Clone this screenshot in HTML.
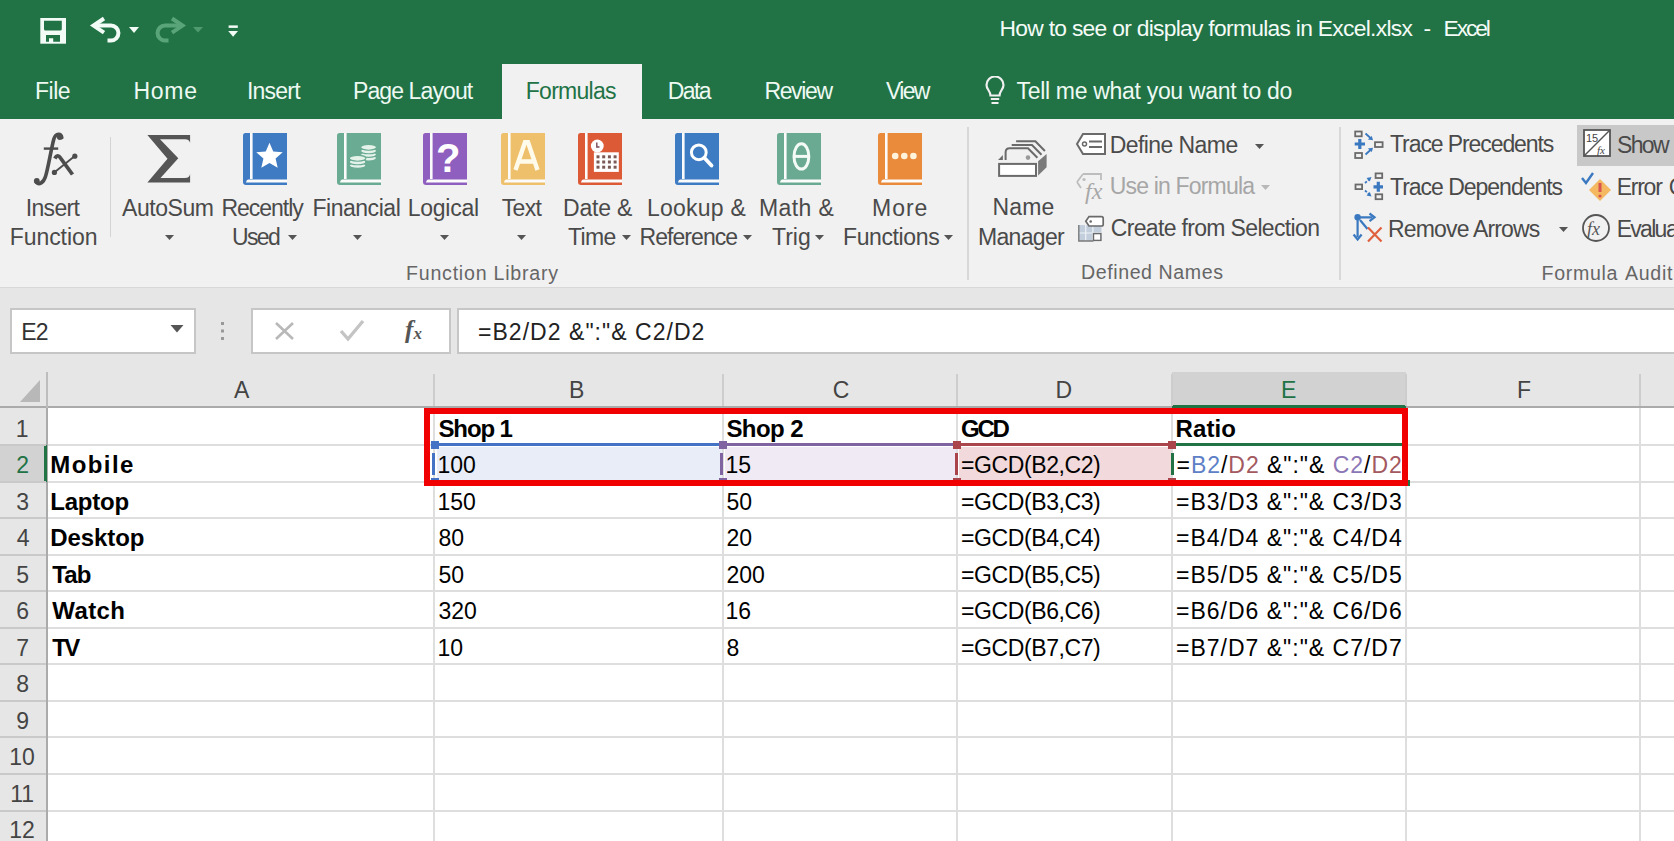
<!DOCTYPE html>
<html><head><meta charset="utf-8">
<style>
html,body{margin:0;padding:0;}
body{width:1674px;height:841px;overflow:hidden;position:relative;background:#fff;font-family:"Liberation Sans",sans-serif;}
.a{position:absolute;}
.t{position:absolute;white-space:nowrap;line-height:1;}
svg{display:block;}
</style></head>
<body>
<div class="a" style="left:0px;top:0px;width:1674px;height:119px;background:#217346"></div>
<div class="a" style="left:502px;top:64px;width:140px;height:55px;background:#f1f1f1"></div>
<svg class="a" style="left:40px;top:18px;" width="26" height="26" viewBox="0 0 26 26"><rect x="0.3" y="0" width="25.8" height="25.7" fill="#f2fbf5"/><path d="M4 2.7H21.8V11Q21.8 12.6 20.2 12.6H5.6Q4 12.6 4 11Z" fill="#217346"/><path d="M6 17H20V23.7H13.2V20.2H9V23.7H6Z" fill="#217346"/></svg>
<svg class="a" style="left:86px;top:12px;" width="40" height="36" viewBox="0 0 40 36"><path d="M18 6.5L7.5 13.6L18 20.7" fill="none" stroke="#f2fbf5" stroke-width="4"/><path d="M9 13.6H25A7.45 7.45 0 0 1 25 28.5H21.5" fill="none" stroke="#f2fbf5" stroke-width="4"/></svg>
<svg class="a" style="left:129px;top:27px;" width="10" height="6" viewBox="0 0 10 6"><path d="M0 0H10L5 6Z" fill="#f2fbf5"/></svg>
<svg class="a" style="left:150.4px;top:12px;" width="40" height="36" viewBox="0 0 40 36"><g transform="translate(40 0) scale(-1 1)"><path d="M18 6.5L7.5 13.6L18 20.7" fill="none" stroke="#5aa47a" stroke-width="4"/><path d="M9 13.6H25A7.45 7.45 0 0 1 25 28.5H21.5" fill="none" stroke="#5aa47a" stroke-width="4"/></g></svg>
<svg class="a" style="left:193.3px;top:27.2px;" width="10" height="5.5" viewBox="0 0 10 5.5"><path d="M0 0H10L5 5.5Z" fill="#4f9a6e"/></svg>
<svg class="a" style="left:228px;top:25px;" width="10" height="12" viewBox="0 0 10 12"><rect x="0.6" y="0.4" width="9.2" height="2.5" fill="#f2fbf5"/><path d="M0.2 6H10L5.1 11.8Z" fill="#f2fbf5"/></svg>
<svg class="a" style="left:984px;top:76px;" width="22" height="30" viewBox="0 0 22 30"><path d="M6.5 19.5C6.5 15 2.5 13.5 2.5 9A8.5 8.5 0 0 1 19.5 9C19.5 13.5 15.5 15 15.5 19.5Z" fill="none" stroke="#f0f0f0" stroke-width="2.2"/><path d="M6.8 23H15.2M7.5 27H14.5" stroke="#f0f0f0" stroke-width="2.2"/></svg>
<div class="a" style="left:0px;top:119px;width:1674px;height:168px;background:#f1f1f1"></div>
<div class="a" style="left:0px;top:287px;width:1674px;height:2px;background:#d8d8d8"></div>
<div class="a" style="left:110px;top:137px;width:1px;height:100px;background:#d4d4d4"></div>
<div class="a" style="left:967px;top:127px;width:2px;height:153px;background:#d8d8d8"></div>
<div class="a" style="left:1339px;top:127px;width:2px;height:153px;background:#d8d8d8"></div>
<div class="a" style="left:1577px;top:125px;width:97px;height:41px;background:#c8c8c8"></div>
<svg class="a" style="left:28px;top:128px;" width="60" height="62" viewBox="0 0 60 62"><path d="M33.8 9.5C33 5 28 5 26 10.5C23.5 19 20 41 17.5 48.5C15.5 55 11 57 8.5 54.5" fill="none" stroke="#4d4d4d" stroke-width="3.6" stroke-linecap="round"/><circle cx="31.8" cy="9" r="2.9" fill="#4d4d4d"/><circle cx="8.8" cy="53" r="2.9" fill="#4d4d4d"/><rect x="15.8" y="19.4" width="14.4" height="2.4" fill="#4d4d4d"/><path d="M26.8 30.5Q29.5 25.5 32.5 30L44.5 46.5" fill="none" stroke="#4d4d4d" stroke-width="3.8"/><path d="M46.5 28.3L26.5 44.3" stroke="#4d4d4d" stroke-width="1.9"/><circle cx="46.8" cy="28.2" r="2.6" fill="#4d4d4d"/><circle cx="26.4" cy="44.4" r="2.6" fill="#4d4d4d"/></svg>
<svg class="a" style="left:140px;top:128px;" width="60" height="62" viewBox="0 0 60 62"><path d="M7.4 7H50.1V15Q49.5 11.2 45 11.2H20L38.3 30.2L20.5 50.1H45Q49.5 50.1 50.1 45.7V54.5H7.4L27.5 30.8Z" fill="#555"/></svg>
<svg class="a" style="left:243px;top:133px;" width="44" height="52" viewBox="0 0 44 52"><path d="M0 2.5Q0 0 2.5 0H44V52H3Q0 52 0 49Z" fill="#3f7bc3"/><rect x="7" y="0" width="2.6" height="46" fill="#fbfbfb"/><path d="M5.5 46.5H44V49.5H3Q3.5 46.5 5.5 46.5Z" fill="#fbfbfb"/><path d="M26.50 9.70L30.26 18.42L39.72 19.30L32.59 25.58L34.67 34.85L26.50 30.00L18.33 34.85L20.41 25.58L13.28 19.30L22.74 18.42Z" fill="#fff"/></svg>
<svg class="a" style="left:336.5px;top:133px;" width="44" height="52" viewBox="0 0 44 52"><path d="M0 2.5Q0 0 2.5 0H44V52H3Q0 52 0 49Z" fill="#6aab93"/><rect x="7" y="0" width="2.6" height="46" fill="#fbfbfb"/><path d="M5.5 46.5H44V49.5H3Q3.5 46.5 5.5 46.5Z" fill="#fbfbfb"/><ellipse cx="31.6" cy="25.1" rx="7.9" ry="2.9" fill="#e4f2ea" stroke="#6aab93" stroke-width="1.1"/><ellipse cx="31.6" cy="21.5" rx="7.9" ry="2.9" fill="#e4f2ea" stroke="#6aab93" stroke-width="1.1"/><ellipse cx="31.6" cy="17.9" rx="7.9" ry="2.9" fill="#e4f2ea" stroke="#6aab93" stroke-width="1.1"/><ellipse cx="31.6" cy="14.3" rx="7.9" ry="2.9" fill="#e4f2ea" stroke="#6aab93" stroke-width="1.1"/><ellipse cx="20.6" cy="32.5" rx="8.3" ry="2.9" fill="#e4f2ea" stroke="#6aab93" stroke-width="1.1"/><ellipse cx="20.6" cy="28.9" rx="8.3" ry="2.9" fill="#e4f2ea" stroke="#6aab93" stroke-width="1.1"/><ellipse cx="20.6" cy="25.3" rx="8.3" ry="2.9" fill="#e4f2ea" stroke="#6aab93" stroke-width="1.1"/></svg>
<svg class="a" style="left:422.5px;top:133px;" width="44" height="52" viewBox="0 0 44 52"><path d="M0 2.5Q0 0 2.5 0H44V52H3Q0 52 0 49Z" fill="#8f5fbf"/><rect x="7" y="0" width="2.6" height="46" fill="#fbfbfb"/><path d="M5.5 46.5H44V49.5H3Q3.5 46.5 5.5 46.5Z" fill="#fbfbfb"/><text x="25.3" y="39" text-anchor="middle" font-family="Liberation Sans" font-weight="bold" font-size="40" fill="#fff">?</text></svg>
<svg class="a" style="left:501px;top:133px;" width="44" height="52" viewBox="0 0 44 52"><path d="M0 2.5Q0 0 2.5 0H44V52H3Q0 52 0 49Z" fill="#efc06c"/><rect x="7" y="0" width="2.6" height="46" fill="#fbfbfb"/><path d="M5.5 46.5H44V49.5H3Q3.5 46.5 5.5 46.5Z" fill="#fbfbfb"/><path d="M14.5 37L24 9.3H27L36.5 37M18.7 28.5H32.3" fill="none" stroke="#fffbea" stroke-width="4.4"/></svg>
<svg class="a" style="left:577.5px;top:133px;" width="44" height="52" viewBox="0 0 44 52"><path d="M0 2.5Q0 0 2.5 0H44V52H3Q0 52 0 49Z" fill="#dd5a37"/><rect x="7" y="0" width="2.6" height="46" fill="#fbfbfb"/><path d="M5.5 46.5H44V49.5H3Q3.5 46.5 5.5 46.5Z" fill="#fbfbfb"/><circle cx="19.3" cy="13" r="6.4" fill="#fff"/><path d="M18.8 9.5V14H21.5" fill="none" stroke="#7a4a5a" stroke-width="1.4"/><rect x="15.9" y="19.3" width="24.9" height="19.6" fill="#fff"/><g fill="#7b5a55"><rect x="18.5" y="22.3" width="3" height="3"/><rect x="24.2" y="22.3" width="3" height="3"/><rect x="29.9" y="22.3" width="3" height="3"/><rect x="35.6" y="22.3" width="3" height="3"/><rect x="18.5" y="27.5" width="3" height="3"/><rect x="24.2" y="27.5" width="3" height="3"/><rect x="29.9" y="27.5" width="3" height="3"/><rect x="35.6" y="27.5" width="3" height="3"/><rect x="18.5" y="32.7" width="3" height="3"/><rect x="24.2" y="32.7" width="3" height="3"/><rect x="29.9" y="32.7" width="3" height="3"/><rect x="35.6" y="32.7" width="3" height="3"/></g></svg>
<svg class="a" style="left:674.5px;top:133px;" width="44" height="52" viewBox="0 0 44 52"><path d="M0 2.5Q0 0 2.5 0H44V52H3Q0 52 0 49Z" fill="#3d7bc2"/><rect x="7" y="0" width="2.6" height="46" fill="#fbfbfb"/><path d="M5.5 46.5H44V49.5H3Q3.5 46.5 5.5 46.5Z" fill="#fbfbfb"/><circle cx="23.8" cy="19.3" r="7.4" fill="none" stroke="#fff" stroke-width="3"/><path d="M29.3 24.8L36.5 32.5" stroke="#fff" stroke-width="3.8" stroke-linecap="round"/></svg>
<svg class="a" style="left:777px;top:133px;" width="44" height="52" viewBox="0 0 44 52"><path d="M0 2.5Q0 0 2.5 0H44V52H3Q0 52 0 49Z" fill="#6aaa93"/><rect x="7" y="0" width="2.6" height="46" fill="#fbfbfb"/><path d="M5.5 46.5H44V49.5H3Q3.5 46.5 5.5 46.5Z" fill="#fbfbfb"/><ellipse cx="24.4" cy="23.4" rx="7.4" ry="12.7" fill="none" stroke="#f4fbf6" stroke-width="3"/><path d="M17.5 23.4H31.3" stroke="#f4fbf6" stroke-width="3"/></svg>
<svg class="a" style="left:877.5px;top:133px;" width="44" height="52" viewBox="0 0 44 52"><path d="M0 2.5Q0 0 2.5 0H44V52H3Q0 52 0 49Z" fill="#ea8a3b"/><rect x="7" y="0" width="2.6" height="46" fill="#fbfbfb"/><path d="M5.5 46.5H44V49.5H3Q3.5 46.5 5.5 46.5Z" fill="#fbfbfb"/><circle cx="17.2" cy="23" r="3.3" fill="#fff3dc"/><circle cx="26.3" cy="23" r="3.3" fill="#fff3dc"/><circle cx="35.4" cy="23" r="3.3" fill="#fff3dc"/></svg>
<svg class="a" style="left:164.5px;top:234.5px;" width="9" height="5" viewBox="0 0 9 5"><path d="M0 0H9L4.5 5Z" fill="#555"/></svg>
<svg class="a" style="left:353px;top:234.5px;" width="9" height="5" viewBox="0 0 9 5"><path d="M0 0H9L4.5 5Z" fill="#555"/></svg>
<svg class="a" style="left:440px;top:234.5px;" width="9" height="5" viewBox="0 0 9 5"><path d="M0 0H9L4.5 5Z" fill="#555"/></svg>
<svg class="a" style="left:517px;top:234.5px;" width="9" height="5" viewBox="0 0 9 5"><path d="M0 0H9L4.5 5Z" fill="#555"/></svg>
<svg class="a" style="left:287.5px;top:235px;" width="9" height="5" viewBox="0 0 9 5"><path d="M0 0H9L4.5 5Z" fill="#555"/></svg>
<svg class="a" style="left:621.5px;top:235px;" width="9" height="5" viewBox="0 0 9 5"><path d="M0 0H9L4.5 5Z" fill="#555"/></svg>
<svg class="a" style="left:742.5px;top:235px;" width="9" height="5" viewBox="0 0 9 5"><path d="M0 0H9L4.5 5Z" fill="#555"/></svg>
<svg class="a" style="left:815px;top:235px;" width="9" height="5" viewBox="0 0 9 5"><path d="M0 0H9L4.5 5Z" fill="#555"/></svg>
<svg class="a" style="left:944px;top:235px;" width="9" height="5" viewBox="0 0 9 5"><path d="M0 0H9L4.5 5Z" fill="#555"/></svg>
<svg class="a" style="left:1255px;top:143.5px;" width="9" height="5" viewBox="0 0 9 5"><path d="M0 0H9L4.5 5Z" fill="#555"/></svg>
<svg class="a" style="left:1261px;top:185px;" width="9" height="5" viewBox="0 0 9 5"><path d="M0 0H9L4.5 5Z" fill="#b8b8b8"/></svg>
<svg class="a" style="left:1559px;top:227px;" width="9" height="5" viewBox="0 0 9 5"><path d="M0 0H9L4.5 5Z" fill="#555"/></svg>
<svg class="a" style="left:995px;top:138px;" width="56" height="44" viewBox="0 0 56 44"><g fill="none" stroke="#6a6a6a" stroke-width="2"><path d="M21.1 3.2H40.4L49.9 13"/><path d="M16.7 7H37L46.5 16.8"/><path d="M10.6 22V14.5Q10.6 10.3 14.7 10.3H33L42.4 19.8"/></g><path d="M3.1 22L7.9 17.1V22Z" fill="#6a6a6a"/><circle cx="33" cy="19.6" r="2.3" fill="#9a9a9a"/><rect x="4.1" y="25.9" width="36.9" height="12" fill="#fff" stroke="#6a6a6a" stroke-width="2"/><path d="M43.1 23.2L51.6 16.1V29.3L43.1 37.4Z" fill="#7a7a7a"/></svg>
<svg class="a" style="left:1075px;top:132px;" width="32" height="24" viewBox="0 0 32 24"><path d="M8 2H30V22H8L2 12Z" fill="#fff" stroke="#6a6a6a" stroke-width="2"/><circle cx="9.5" cy="12" r="2" fill="none" stroke="#6a6a6a" stroke-width="1.5"/><path d="M14 9.5H27M14 15H27" stroke="#6a6a6a" stroke-width="2"/></svg>
<svg class="a" style="left:1075px;top:172px;" width="32" height="32" viewBox="0 0 32 32"><path d="M8 2H26V8M2 10L8 2M2 10L6 16" fill="none" stroke="#bdbdbd" stroke-width="1.8"/><circle cx="9" cy="7.5" r="1.6" fill="#bdbdbd"/><text x="10" y="27" font-family="Liberation Serif" font-style="italic" font-size="24" fill="#a8a8a8">fx</text></svg>
<svg class="a" style="left:1076px;top:214px;" width="30" height="30" viewBox="0 0 30 30"><rect x="2.6" y="11.1" width="22.8" height="15.8" fill="#c3cedc"/><path d="M2.6 19H25.4M9.7 11.1V26.9M16.9 11.1V26.9" stroke="#eef2f6" stroke-width="1.2"/><rect x="17.5" y="19.6" width="7.4" height="6.8" fill="#fff" stroke="#6a6a6a" stroke-width="1.4"/><path d="M2.8 11V27H17.5" fill="none" stroke="#7a7a7a" stroke-width="1.4"/><path d="M13 2.6H25.5Q27.2 2.6 27.2 4.3V10.4Q27.2 12 25.5 12H13L9.8 7.3Z" fill="#fff" stroke="#6a6a6a" stroke-width="1.7"/><circle cx="14.7" cy="7.5" r="1.3" fill="#6a6a6a"/></svg>
<svg class="a" style="left:1352px;top:128px;" width="34" height="34" viewBox="0 0 34 34"><g fill="none" stroke="#6a6a6a" stroke-width="1.8"><rect x="3.2" y="3.5" width="6.5" height="4.8"/><rect x="3.2" y="25" width="6.8" height="5"/><rect x="23" y="14.2" width="7.6" height="4.8"/></g><path d="M2.7 16H13M7.8 11V21" stroke="#3a78c0" stroke-width="3.2"/><path d="M13.5 5.5L18.5 10M13.5 26.5L18.5 22" stroke="#3a78c0" stroke-width="1.8"/><path d="M21 12.3L15.8 11.6L19.8 8Z M21 19.7L15.8 20.4L19.8 24Z" fill="#3a78c0"/></svg>
<svg class="a" style="left:1352px;top:170px;" width="34" height="34" viewBox="0 0 34 34"><g fill="none" stroke="#6a6a6a" stroke-width="1.8"><rect x="3.5" y="14.5" width="6.6" height="4.6"/><rect x="23.6" y="3.4" width="6.6" height="4.6"/><rect x="23.6" y="24.3" width="6.6" height="4.9"/></g><path d="M21.5 16.8H31M26.3 11.8V21.8" stroke="#3a78c0" stroke-width="3.2"/><path d="M13 13L17.5 9M13 20.5L17.5 24.5" stroke="#3a78c0" stroke-width="1.8" stroke-dasharray="2.5 1.5"/><path d="M19.5 7L14.5 8L17.8 11.5Z M19.5 26.5L14.5 25.5L17.8 22Z" fill="#3a78c0"/></svg>
<svg class="a" style="left:1352px;top:212px;" width="34" height="34" viewBox="0 0 34 34"><circle cx="5.6" cy="5.3" r="3.2" fill="#3a78c0"/><path d="M5.6 5.3H20M5.6 5.3V25" stroke="#3a78c0" stroke-width="2.2"/><path d="M1.6 22.5L5.6 27.5L9.6 22.5M17.5 1.5L22.5 5.3L17.5 9.1" fill="none" stroke="#3a78c0" stroke-width="2.2"/><path d="M8 8L15.5 17" stroke="#3a78c0" stroke-width="2.2"/><path d="M16 15.5L29.5 29.5M29.5 15.5L16 29.5" stroke="#e0603e" stroke-width="2.2"/></svg>
<svg class="a" style="left:1582px;top:128px;" width="32" height="34" viewBox="0 0 32 34"><rect x="2" y="2" width="26" height="26" fill="#fff" stroke="#555" stroke-width="1.8"/><path d="M2 28L28 2" stroke="#555" stroke-width="1.5"/><text x="4" y="14" font-family="Liberation Sans" font-size="11" fill="#444">15</text><text x="15" y="26" font-family="Liberation Serif" font-style="italic" font-size="11" fill="#444">fx</text></svg>
<svg class="a" style="left:1581px;top:171px;" width="34" height="32" viewBox="0 0 34 32"><path d="M1 7L5 12L12 2" fill="none" stroke="#3a78c0" stroke-width="2.4"/><path d="M19 8L30 19L19 30L8 19Z" fill="#f4b860"/><path d="M19 12V21" stroke="#d9534f" stroke-width="3"/><circle cx="19" cy="25" r="1.6" fill="#d9534f"/></svg>
<svg class="a" style="left:1581px;top:212px;" width="32" height="32" viewBox="0 0 32 32"><circle cx="15" cy="16" r="13" fill="none" stroke="#555" stroke-width="1.8"/><text x="6" y="23" font-family="Liberation Serif" font-style="italic" font-size="18" fill="#555">fx</text></svg>
<div class="a" style="left:0px;top:288px;width:1674px;height:84px;background:#e6e6e6"></div>
<div class="a" style="left:10px;top:308px;width:186px;height:46px;background:#fff;border:2px solid #c6c6c6;box-sizing:border-box"></div>
<svg class="a" style="left:169.5px;top:325px;" width="14" height="8" viewBox="0 0 14 8"><path d="M0.5 0H13.5L7 7.5Z" fill="#555"/></svg>
<svg class="a" style="left:219px;top:321px;" width="8" height="20" viewBox="0 0 8 20"><rect x="2" y="1" width="3" height="3" fill="#999"/><rect x="2" y="8.5" width="3" height="3" fill="#999"/><rect x="2" y="16" width="3" height="3" fill="#999"/></svg>
<div class="a" style="left:251px;top:308px;width:200px;height:46px;background:#fff;border:2px solid #c6c6c6;box-sizing:border-box"></div>
<svg class="a" style="left:273px;top:320px;" width="24" height="22" viewBox="0 0 24 22"><path d="M3 3L20 19M20 3L3 19" stroke="#b8b8b8" stroke-width="2.6"/></svg>
<svg class="a" style="left:338px;top:317px;" width="28" height="26" viewBox="0 0 28 26"><path d="M3 14L10 22L25 4" fill="none" stroke="#c4c4c4" stroke-width="3.4"/></svg>
<svg class="a" style="left:400px;top:314px;" width="34" height="32" viewBox="0 0 34 32"><text x="5" y="24" font-family="Liberation Serif" font-style="italic" font-weight="bold" font-size="25" fill="#555">f</text><text x="13.5" y="24.5" font-family="Liberation Serif" font-style="italic" font-weight="bold" font-size="17" fill="#555">x</text></svg>
<div class="a" style="left:457px;top:308px;width:1230px;height:46px;background:#fff;border:2px solid #c6c6c6;box-sizing:border-box"></div>
<div class="a" style="left:0px;top:372px;width:1674px;height:36px;background:#e6e6e6"></div>
<div class="a" style="left:0px;top:406px;width:1674px;height:2px;background:#ababab"></div>
<div class="a" style="left:1172px;top:372px;width:234px;height:34px;background:#d2d2d2"></div>
<div class="a" style="left:1172px;top:405px;width:234px;height:3px;background:#217346"></div>
<div class="a" style="left:46px;top:372px;width:2px;height:36px;background:#bdbdbd"></div>
<svg class="a" style="left:18px;top:378px;" width="24" height="26" viewBox="0 0 24 26"><path d="M22 2V24H2Z" fill="#b8b8b8"/></svg>
<div class="a" style="left:433px;top:374px;width:2px;height:32px;background:#cdcdcd"></div>
<div class="a" style="left:722px;top:374px;width:2px;height:32px;background:#cdcdcd"></div>
<div class="a" style="left:956px;top:374px;width:2px;height:32px;background:#cdcdcd"></div>
<div class="a" style="left:1171px;top:374px;width:2px;height:32px;background:#cdcdcd"></div>
<div class="a" style="left:1405px;top:374px;width:2px;height:32px;background:#cdcdcd"></div>
<div class="a" style="left:1639px;top:374px;width:2px;height:32px;background:#cdcdcd"></div>
<div class="a" style="left:0px;top:408px;width:46px;height:433px;background:#e6e6e6"></div>
<div class="a" style="left:0px;top:446px;width:46px;height:36px;background:#d2d2d2"></div>
<div class="a" style="left:46px;top:408px;width:2px;height:433px;background:#ababab"></div>
<div class="a" style="left:43.5px;top:445px;width:3.5px;height:37px;background:#217346"></div>
<div class="a" style="left:0px;top:444px;width:46px;height:2px;background:#c9c9c9"></div>
<div class="a" style="left:48px;top:444px;width:1626px;height:2px;background:#dedede"></div>
<div class="a" style="left:0px;top:481px;width:46px;height:2px;background:#c9c9c9"></div>
<div class="a" style="left:48px;top:481px;width:1626px;height:2px;background:#dedede"></div>
<div class="a" style="left:0px;top:517px;width:46px;height:2px;background:#c9c9c9"></div>
<div class="a" style="left:48px;top:517px;width:1626px;height:2px;background:#dedede"></div>
<div class="a" style="left:0px;top:554px;width:46px;height:2px;background:#c9c9c9"></div>
<div class="a" style="left:48px;top:554px;width:1626px;height:2px;background:#dedede"></div>
<div class="a" style="left:0px;top:590px;width:46px;height:2px;background:#c9c9c9"></div>
<div class="a" style="left:48px;top:590px;width:1626px;height:2px;background:#dedede"></div>
<div class="a" style="left:0px;top:627px;width:46px;height:2px;background:#c9c9c9"></div>
<div class="a" style="left:48px;top:627px;width:1626px;height:2px;background:#dedede"></div>
<div class="a" style="left:0px;top:663px;width:46px;height:2px;background:#c9c9c9"></div>
<div class="a" style="left:48px;top:663px;width:1626px;height:2px;background:#dedede"></div>
<div class="a" style="left:0px;top:700px;width:46px;height:2px;background:#c9c9c9"></div>
<div class="a" style="left:48px;top:700px;width:1626px;height:2px;background:#dedede"></div>
<div class="a" style="left:0px;top:736px;width:46px;height:2px;background:#c9c9c9"></div>
<div class="a" style="left:48px;top:736px;width:1626px;height:2px;background:#dedede"></div>
<div class="a" style="left:0px;top:773px;width:46px;height:2px;background:#c9c9c9"></div>
<div class="a" style="left:48px;top:773px;width:1626px;height:2px;background:#dedede"></div>
<div class="a" style="left:0px;top:810px;width:46px;height:2px;background:#c9c9c9"></div>
<div class="a" style="left:48px;top:810px;width:1626px;height:2px;background:#dedede"></div>
<div class="a" style="left:0px;top:846px;width:46px;height:2px;background:#c9c9c9"></div>
<div class="a" style="left:48px;top:846px;width:1626px;height:2px;background:#dedede"></div>
<div class="a" style="left:433px;top:408px;width:2px;height:433px;background:#dedede"></div>
<div class="a" style="left:722px;top:408px;width:2px;height:433px;background:#dedede"></div>
<div class="a" style="left:956px;top:408px;width:2px;height:433px;background:#dedede"></div>
<div class="a" style="left:1171px;top:408px;width:2px;height:433px;background:#dedede"></div>
<div class="a" style="left:1405px;top:408px;width:2px;height:433px;background:#dedede"></div>
<div class="a" style="left:1639px;top:408px;width:2px;height:433px;background:#dedede"></div>
<div class="a" style="left:437px;top:447px;width:285px;height:34px;background:#e8edf7"></div>
<div class="a" style="left:725px;top:447px;width:231px;height:34px;background:#efeaf3"></div>
<div class="a" style="left:959px;top:447px;width:212px;height:34px;background:#f2d9db"></div>
<div class="a" style="left:438.5px;top:443px;width:280px;height:3px;background:#4472c4"></div>
<div class="a" style="left:430.5px;top:441px;width:8px;height:8px;background:#4472c4"></div>
<div class="a" style="left:432px;top:453px;width:3px;height:22px;background:#4472c4"></div>
<div class="a" style="left:430.5px;top:477.5px;width:8px;height:3px;background:#4472c4"></div>
<div class="a" style="left:726.5px;top:443px;width:226.5px;height:3px;background:#8064a2"></div>
<div class="a" style="left:718.5px;top:441px;width:8px;height:8px;background:#8064a2"></div>
<div class="a" style="left:720px;top:453px;width:3px;height:22px;background:#8064a2"></div>
<div class="a" style="left:718.5px;top:477.5px;width:8px;height:3px;background:#8064a2"></div>
<div class="a" style="left:961px;top:443px;width:207px;height:3px;background:#a9454b"></div>
<div class="a" style="left:953px;top:441px;width:8px;height:8px;background:#a9454b"></div>
<div class="a" style="left:954.5px;top:453px;width:3px;height:22px;background:#a9454b"></div>
<div class="a" style="left:953px;top:477.5px;width:8px;height:3px;background:#a9454b"></div>
<div class="a" style="left:1176px;top:443px;width:226px;height:3px;background:#217346"></div>
<div class="a" style="left:1168px;top:441px;width:8px;height:8px;background:#a9454b"></div>
<div class="a" style="left:1170.5px;top:453px;width:3px;height:22px;background:#217346"></div>
<div class="a" style="left:1168px;top:477.5px;width:8px;height:3px;background:#a9454b"></div>
<div class="a" style="left:1402px;top:480px;width:8px;height:6px;background:#217346"></div>
<div class="a" style="left:424px;top:408px;width:984px;height:78px;border:6px solid #f00000;box-sizing:border-box"></div>
<div class="t" style="left:999.50px;top:17.30px;font-size:22.8px;color:#f4fbf6;letter-spacing:-0.70px">How to see or display formulas in Excel.xlsx</div>
<div class="t" style="left:1423.40px;top:17.30px;font-size:22.8px;color:#f4fbf6">-</div>
<div class="t" style="left:1443.60px;top:17.30px;font-size:22.8px;color:#f4fbf6;letter-spacing:-2.15px">Excel</div>
<div class="t" style="left:35.00px;top:80.03px;font-size:23px;color:#eef9f2;letter-spacing:-0.47px">File</div>
<div class="t" style="left:133.50px;top:80.03px;font-size:23px;color:#eef9f2;letter-spacing:0.73px">Home</div>
<div class="t" style="left:247.00px;top:80.03px;font-size:23px;color:#eef9f2;letter-spacing:-0.80px">Insert</div>
<div class="t" style="left:353.00px;top:80.03px;font-size:23px;color:#eef9f2;letter-spacing:-0.90px">Page Layout</div>
<div class="t" style="left:525.80px;top:80.03px;font-size:23px;color:#217346;letter-spacing:-0.74px">Formulas</div>
<div class="t" style="left:667.70px;top:80.03px;font-size:23px;color:#eef9f2;letter-spacing:-1.57px">Data</div>
<div class="t" style="left:764.40px;top:80.03px;font-size:23px;color:#eef9f2;letter-spacing:-1.36px">Review</div>
<div class="t" style="left:886.00px;top:80.03px;font-size:23px;color:#eef9f2;letter-spacing:-1.67px">View</div>
<div class="t" style="left:1016.50px;top:80.03px;font-size:23px;color:#eef9f2;letter-spacing:-0.31px">Tell me what you want to do</div>
<div class="t" style="left:25.80px;top:196.53px;font-size:23px;color:#4a4a4a;letter-spacing:-0.70px">Insert</div>
<div class="t" style="left:9.70px;top:226.03px;font-size:23px;color:#4a4a4a;letter-spacing:-0.06px">Function</div>
<div class="t" style="left:122.00px;top:196.53px;font-size:23px;color:#4a4a4a;letter-spacing:-0.43px">AutoSum</div>
<div class="t" style="left:221.40px;top:196.53px;font-size:23px;color:#4a4a4a;letter-spacing:-1.01px">Recently</div>
<div class="t" style="left:232.00px;top:226.03px;font-size:23px;color:#4a4a4a;letter-spacing:-1.67px">Used</div>
<div class="t" style="left:312.40px;top:196.53px;font-size:23px;color:#4a4a4a;letter-spacing:-0.46px">Financial</div>
<div class="t" style="left:407.70px;top:196.53px;font-size:23px;color:#4a4a4a;letter-spacing:-0.23px">Logical</div>
<div class="t" style="left:501.70px;top:196.53px;font-size:23px;color:#4a4a4a;letter-spacing:-0.63px">Text</div>
<div class="t" style="left:563.00px;top:196.53px;font-size:23px;color:#4a4a4a;letter-spacing:-0.20px">Date &amp;</div>
<div class="t" style="left:568.00px;top:226.03px;font-size:23px;color:#4a4a4a;letter-spacing:-0.67px">Time</div>
<div class="t" style="left:647.00px;top:196.53px;font-size:23px;color:#4a4a4a;letter-spacing:0.23px">Lookup &amp;</div>
<div class="t" style="left:639.50px;top:226.03px;font-size:23px;color:#4a4a4a;letter-spacing:-0.94px">Reference</div>
<div class="t" style="left:759.00px;top:196.53px;font-size:23px;color:#4a4a4a;letter-spacing:0.40px">Math &amp;</div>
<div class="t" style="left:772.00px;top:226.03px;font-size:23px;color:#4a4a4a">Trig</div>
<div class="t" style="left:872.00px;top:196.53px;font-size:23px;color:#4a4a4a;letter-spacing:1.00px">More</div>
<div class="t" style="left:843.00px;top:226.03px;font-size:23px;color:#4a4a4a;letter-spacing:-0.38px">Functions</div>
<div class="t" style="left:992.60px;top:195.53px;font-size:23px;color:#4a4a4a;letter-spacing:0.13px">Name</div>
<div class="t" style="left:978.00px;top:225.53px;font-size:23px;color:#4a4a4a;letter-spacing:-0.67px">Manager</div>
<div class="t" style="left:1109.70px;top:134.23px;font-size:23px;color:#4a4a4a;letter-spacing:-0.57px">Define Name</div>
<div class="t" style="left:1109.70px;top:175.33px;font-size:23px;color:#a6a6a6;letter-spacing:-0.82px">Use in Formula</div>
<div class="t" style="left:1110.70px;top:217.13px;font-size:23px;color:#4a4a4a;letter-spacing:-0.66px">Create from Selection</div>
<div class="t" style="left:1390.00px;top:133.43px;font-size:23px;color:#4a4a4a;letter-spacing:-1.09px">Trace Precedents</div>
<div class="t" style="left:1390.00px;top:175.53px;font-size:23px;color:#4a4a4a;letter-spacing:-1.02px">Trace Dependents</div>
<div class="t" style="left:1388.00px;top:217.53px;font-size:23px;color:#4a4a4a;letter-spacing:-0.83px">Remove Arrows</div>
<div class="t" style="left:1617.00px;top:133.53px;font-size:23px;color:#4a4a4a;letter-spacing:-1.67px">Show</div>
<div class="t" style="left:1616.70px;top:175.53px;font-size:23px;color:#4a4a4a;letter-spacing:-1.25px">Error</div>
<div class="t" style="left:1668.70px;top:175.53px;font-size:23px;color:#4a4a4a">C</div>
<div class="t" style="left:1616.70px;top:217.53px;font-size:23px;color:#4a4a4a;letter-spacing:-1.73px">Evalu</div>
<div class="t" style="left:1666.00px;top:217.53px;font-size:23px;color:#4a4a4a">a</div>
<div class="t" style="left:406.00px;top:263.61px;font-size:19.6px;color:#666;letter-spacing:0.77px">Function Library</div>
<div class="t" style="left:1081.00px;top:263.11px;font-size:19.6px;color:#666;letter-spacing:0.58px">Defined Names</div>
<div class="t" style="left:1541.50px;top:263.81px;font-size:19.6px;color:#666;letter-spacing:0.67px">Formula</div>
<div class="t" style="left:1625.00px;top:263.81px;font-size:19.6px;color:#666;letter-spacing:0.70px">Auditing</div>
<div class="t" style="left:21.20px;top:320.83px;font-size:23px;color:#333;letter-spacing:-0.90px">E2</div>
<div class="t" style="left:478.00px;top:320.93px;font-size:23px;color:#222;letter-spacing:1.04px">=B2/D2 &amp;":"&amp; C2/D2</div>
<div class="t" style="left:233.90px;top:378.73px;font-size:23px;color:#444">A</div>
<div class="t" style="left:569.00px;top:378.73px;font-size:23px;color:#444">B</div>
<div class="t" style="left:832.70px;top:378.73px;font-size:23px;color:#444">C</div>
<div class="t" style="left:1055.60px;top:378.73px;font-size:23px;color:#444">D</div>
<div class="t" style="left:1281.00px;top:378.73px;font-size:23px;color:#217346">E</div>
<div class="t" style="left:1517.00px;top:378.73px;font-size:23px;color:#444">F</div>
<div class="t" style="left:438.50px;top:416.68px;font-size:24px;color:#000;letter-spacing:-1.14px;font-weight:bold">Shop 1</div>
<div class="t" style="left:726.40px;top:416.68px;font-size:24px;color:#000;letter-spacing:-0.56px;font-weight:bold">Shop 2</div>
<div class="t" style="left:961.00px;top:416.68px;font-size:24px;color:#000;letter-spacing:-2.25px;font-weight:bold">GCD</div>
<div class="t" style="left:1175.50px;top:416.68px;font-size:24px;color:#000;letter-spacing:0.12px;font-weight:bold">Ratio</div>
<div class="t" style="left:50.30px;top:453.18px;font-size:24px;color:#000;letter-spacing:1.40px;font-weight:bold">Mobile</div>
<div class="t" style="left:437.50px;top:454.03px;font-size:23px;color:#000">100</div>
<div class="t" style="left:725.40px;top:454.03px;font-size:23px;color:#000">15</div>
<div class="t" style="left:961.00px;top:454.03px;font-size:23px;color:#000;letter-spacing:-0.40px">=GCD(B2,C2)</div>
<div class="t" style="left:1176.50px;top:454.03px;font-size:23px;color:#000;letter-spacing:0.97px">=<span style="color:#5d80c6">B2</span>/<span style="color:#a35960">D2</span> &amp;":"&amp; <span style="color:#8c77b6">C2</span>/<span style="color:#a35960">D2</span></div>
<div class="t" style="left:50.30px;top:489.68px;font-size:24px;color:#000;letter-spacing:-0.22px;font-weight:bold">Laptop</div>
<div class="t" style="left:437.50px;top:490.53px;font-size:23px;color:#000">150</div>
<div class="t" style="left:726.40px;top:490.53px;font-size:23px;color:#000">50</div>
<div class="t" style="left:961.00px;top:490.53px;font-size:23px;color:#000;letter-spacing:-0.40px">=GCD(B3,C3)</div>
<div class="t" style="left:1176.00px;top:490.53px;font-size:23px;color:#000;letter-spacing:1.00px">=B3/D3 &amp;":"&amp; C3/D3</div>
<div class="t" style="left:50.30px;top:526.18px;font-size:24px;color:#000;letter-spacing:-0.10px;font-weight:bold">Desktop</div>
<div class="t" style="left:438.50px;top:527.03px;font-size:23px;color:#000">80</div>
<div class="t" style="left:726.40px;top:527.03px;font-size:23px;color:#000">20</div>
<div class="t" style="left:961.00px;top:527.03px;font-size:23px;color:#000;letter-spacing:-0.40px">=GCD(B4,C4)</div>
<div class="t" style="left:1176.00px;top:527.03px;font-size:23px;color:#000;letter-spacing:1.00px">=B4/D4 &amp;":"&amp; C4/D4</div>
<div class="t" style="left:52.30px;top:562.68px;font-size:24px;color:#000;letter-spacing:-0.85px;font-weight:bold">Tab</div>
<div class="t" style="left:438.50px;top:563.53px;font-size:23px;color:#000">50</div>
<div class="t" style="left:726.40px;top:563.53px;font-size:23px;color:#000">200</div>
<div class="t" style="left:961.00px;top:563.53px;font-size:23px;color:#000;letter-spacing:-0.40px">=GCD(B5,C5)</div>
<div class="t" style="left:1176.00px;top:563.53px;font-size:23px;color:#000;letter-spacing:1.00px">=B5/D5 &amp;":"&amp; C5/D5</div>
<div class="t" style="left:52.30px;top:599.18px;font-size:24px;color:#000;letter-spacing:0.38px;font-weight:bold">Watch</div>
<div class="t" style="left:438.50px;top:600.03px;font-size:23px;color:#000">320</div>
<div class="t" style="left:725.40px;top:600.03px;font-size:23px;color:#000">16</div>
<div class="t" style="left:961.00px;top:600.03px;font-size:23px;color:#000;letter-spacing:-0.40px">=GCD(B6,C6)</div>
<div class="t" style="left:1176.00px;top:600.03px;font-size:23px;color:#000;letter-spacing:1.00px">=B6/D6 &amp;":"&amp; C6/D6</div>
<div class="t" style="left:52.30px;top:635.68px;font-size:24px;color:#000;letter-spacing:-2.80px;font-weight:bold">TV</div>
<div class="t" style="left:437.50px;top:636.53px;font-size:23px;color:#000">10</div>
<div class="t" style="left:726.40px;top:636.53px;font-size:23px;color:#000">8</div>
<div class="t" style="left:961.00px;top:636.53px;font-size:23px;color:#000;letter-spacing:-0.40px">=GCD(B7,C7)</div>
<div class="t" style="left:1176.00px;top:636.53px;font-size:23px;color:#000;letter-spacing:1.00px">=B7/D7 &amp;":"&amp; C7/D7</div>
<div class="t" style="left:15.70px;top:417.53px;font-size:23px;color:#444">1</div>
<div class="t" style="left:16.20px;top:454.03px;font-size:23px;color:#217346">2</div>
<div class="t" style="left:16.20px;top:490.53px;font-size:23px;color:#444">3</div>
<div class="t" style="left:16.70px;top:527.03px;font-size:23px;color:#444">4</div>
<div class="t" style="left:16.20px;top:563.53px;font-size:23px;color:#444">5</div>
<div class="t" style="left:16.20px;top:600.03px;font-size:23px;color:#444">6</div>
<div class="t" style="left:16.20px;top:636.53px;font-size:23px;color:#444">7</div>
<div class="t" style="left:16.20px;top:673.03px;font-size:23px;color:#444">8</div>
<div class="t" style="left:16.20px;top:709.53px;font-size:23px;color:#444">9</div>
<div class="t" style="left:9.20px;top:746.03px;font-size:23px;color:#444">10</div>
<div class="t" style="left:10.20px;top:782.53px;font-size:23px;color:#444">11</div>
<div class="t" style="left:9.20px;top:819.03px;font-size:23px;color:#444">12</div>
</body></html>
